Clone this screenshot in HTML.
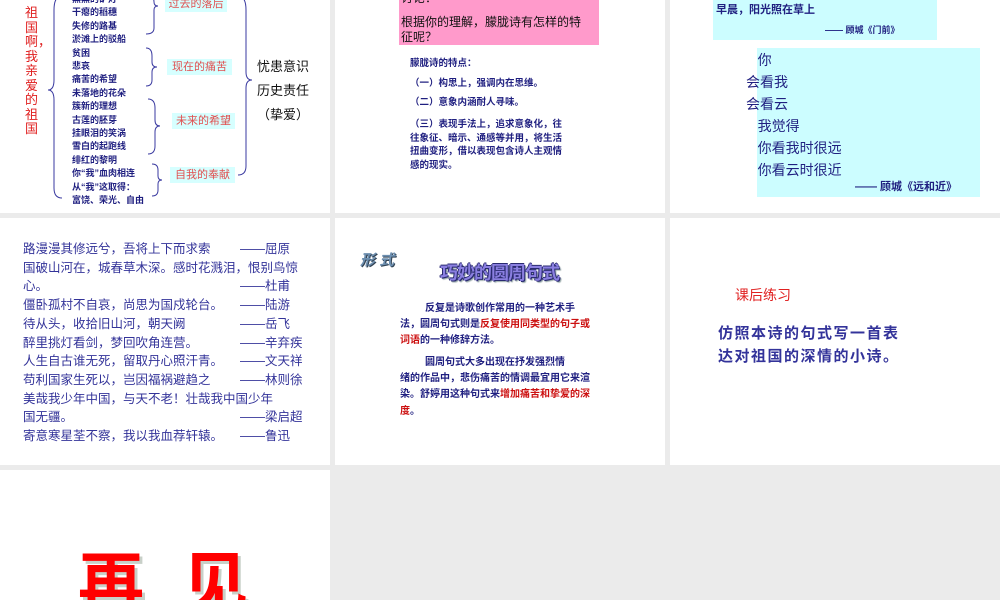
<!DOCTYPE html>
<html><head><meta charset="utf-8"><style>
body{margin:0;width:1000px;height:600px;background:#ebebeb;overflow:hidden;position:relative;font-family:"Liberation Sans","Noto Sans CJK SC",sans-serif}
.s{position:absolute;background:#fff;overflow:hidden}
.a{position:absolute;white-space:nowrap;line-height:1}
.n{color:#1f1f80}
.b{font-weight:bold}
</style></head><body>

<!-- Slide 1 -->
<div class="s" style="left:0;top:0;width:330px;height:213px">
  <div class="a" style="left:25px;top:6px;width:14px;font-size:13px;color:#e02020;white-space:normal;line-height:14.5px">祖国啊，我亲爱的祖国</div>
  <svg style="position:absolute;left:0;top:0" width="330" height="213">
    <g fill="none" stroke="#3a3aa0" stroke-width="1">
      <path d="M62,-4 Q54,-4 54,10 L54,80 Q54,90 48,90 Q54,90 54,100 L54,188 Q54,198 62,198"/>
      <path d="M148,-4 Q154,-4 154,2 Q154,6 158,6 Q154,6 154,10 L154,28 Q154,34 146,34"/>
      <path d="M146,48 Q152,48 152,56 L152,62 Q152,67 157,67 Q152,67 152,72 L152,80 Q152,86 146,86"/>
      <path d="M148,99 Q155,99 155,108 L155,120 Q155,126 160,126 Q155,126 155,132 L155,146 Q155,154 148,154"/>
      <path d="M152,164 Q158,164 158,170 L158,176 Q158,180 162,180 Q158,180 158,184 L158,190 Q158,196 152,196"/>
      <path d="M238,-4 Q246,-4 246,10 L246,72 Q246,80 252,80 Q246,80 246,88 L246,166 Q246,175 238,175"/>
    </g>
  </svg>
  <div class="a n b" style="left:72px;top:-7px;font-size:9px;line-height:13.4px;white-space:pre">黑黑的矿灯
干瘪的稻穗
失修的路基
淤滩上的驳船
贫困
悲哀
痛苦的希望
未落地的花朵
簇新的理想
古莲的胚芽
挂眼泪的笑涡
雪白的起跑线
绯红的黎明
你“我”血肉相连
从“我”这取得：
富饶、荣光、自由</div>
  <div class="a" style="left:165px;top:-3px;width:62px;height:15px;background:#d6ffff;color:#e05050;font-size:11px;line-height:15px;text-align:center">过去的落后</div>
  <div class="a" style="left:167px;top:59px;width:65px;height:16px;background:#d6ffff;color:#e05050;font-size:11px;line-height:16px;text-align:center">现在的痛苦</div>
  <div class="a" style="left:172px;top:113px;width:63px;height:16px;background:#d6ffff;color:#e05050;font-size:11px;line-height:16px;text-align:center">未来的希望</div>
  <div class="a" style="left:170px;top:167px;width:65px;height:16px;background:#d6ffff;color:#e05050;font-size:11px;line-height:16px;text-align:center">自我的奉献</div>
  <div class="a" style="left:257px;top:55px;font-size:13px;line-height:24px;color:#111;white-space:pre">忧患意识
历史责任
（挚爱）</div>
</div>

<!-- Slide 2 -->
<div class="s" style="left:335px;top:0;width:330px;height:213px">
  <div class="a" style="left:64px;top:0;width:200px;height:45px;background:#ff9acb"></div>
  <div class="a" style="left:66px;top:-8px;font-size:12px;color:#111">讨论：</div>
  <div class="a" style="left:66px;top:15px;font-size:12px;line-height:15px;color:#111;white-space:pre">根据你的理解，朦胧诗有怎样的特
征呢？</div>
  <div class="a n b" style="left:75px;top:59px;font-size:9.5px">朦胧诗的特点：</div>
  <div class="a n b" style="left:75px;top:79px;font-size:9.5px">（一）构思上，强调内在思维。</div>
  <div class="a n b" style="left:75px;top:98px;font-size:9.5px">（二）意象内涵耐人寻味。</div>
  <div class="a n b" style="left:75px;top:118px;font-size:9.5px;line-height:13.7px;white-space:pre">（三）表现手法上，追求意象化，往
往象征、暗示、通感等并用，将生活
扭曲变形，借以表现包含诗人主观情
感的现实。</div>
</div>

<!-- Slide 3 -->
<div class="s" style="left:670px;top:0;width:330px;height:213px">
  <div class="a" style="left:43px;top:0;width:224px;height:40px;background:#ccfdff"></div>
  <div class="a n b" style="left:46px;top:5px;font-size:11px">早晨，阳光照在草上</div>
  <div class="a n b" style="left:155px;top:26px;font-size:9px">—— 顾城《门前》</div>
  <div class="a" style="left:87px;top:48px;width:223px;height:149px;background:#ccfdff"></div>
  <div class="a n" style="left:76px;top:49px;font-size:14px;line-height:22px;white-space:pre">   你
会看我
会看云
   我觉得
   你看我时很远
   你看云时很近</div>
  <div class="a n b" style="left:185px;top:182px;font-size:11px">—— 顾城《远和近》</div>
</div>

<!-- Slide 4 -->
<div class="s" style="left:0;top:218px;width:330px;height:247px">
  <div class="a" style="left:23px;top:22px;font-size:12.5px;color:#333399;line-height:18.7px;white-space:pre">路漫漫其修远兮，吾将上下而求索
国破山河在，城春草木深。感时花溅泪，恨别鸟惊
心。
僵卧孤村不自哀，尚思为国戍轮台。
待从头，收拾旧山河，朝天阙
醉里挑灯看剑，梦回吹角连营。
人生自古谁无死，留取丹心照汗青。
苟利国家生死以，岂因福祸避趋之
美哉我少年中国，与天不老！壮哉我中国少年
国无疆。
寄意寒星荃不察，我以我血荐轩辕。</div>
  <div class="a" style="left:240px;top:22px;font-size:12.5px;color:#333399;line-height:18.7px;white-space:pre">——屈原

——杜甫
——陆游
——岳飞
——辛弃疾
——文天祥
——林则徐

——梁启超
——鲁迅</div>
</div>

<!-- Slide 5 -->
<div class="s" style="left:335px;top:218px;width:330px;height:247px">
  <div class="a b" style="left:25px;top:35px;font-size:15px;font-style:italic;color:#6d8fb0;text-shadow:1px 1px 0 #345">形 式</div>
  <div class="a b" style="left:105px;top:46px;font-size:18px;color:#8a7fe0;letter-spacing:-1px;text-shadow:1px 1px 0 #2a2a70,-1px 0 0 #2a2a70,0 -1px 0 #2a2a70,2px 2px 1px #9aa">巧妙的圆周句式</div>
  <div class="a n b" style="left:65px;top:83px;font-size:10px;line-height:16.2px;white-space:pre">         反复是诗歌创作常用的一种艺术手
法，圆周句式则是<span style="color:#cc1010">反复使用同类型的句子或</span>
<span style="color:#cc1010">词语</span>的一种修辞方法。</div>
  <div class="a n b" style="left:65px;top:137px;font-size:10px;line-height:16.2px;white-space:pre">         圆周句式大多出现在抒发强烈情
绪的作品中，悲伤痛苦的情调最宜用它来渲
染。舒婷用这种句式来<span style="color:#cc1010">增加痛苦和挚爱的深</span>
<span style="color:#cc1010">度</span>。</div>
</div>

<!-- Slide 6 -->
<div class="s" style="left:670px;top:218px;width:330px;height:247px">
  <div class="a" style="left:65px;top:70px;font-size:14px;color:#e02020">课后练习</div>
  <div class="a b" style="left:48px;top:104px;font-size:15px;line-height:23px;color:#33339a;letter-spacing:1.5px;white-space:pre">仿照本诗的句式写一首表
达对祖国的深情的小诗。</div>
</div>

<!-- Slide 7 -->
<div class="s" style="left:0;top:470px;width:330px;height:130px">
  <div class="a b" style="left:78px;top:80px;font-size:66px;color:#ff0000;letter-spacing:38px;text-shadow:3px 3px 0 #c8d0c8">再见</div>
</div>
</body></html>
